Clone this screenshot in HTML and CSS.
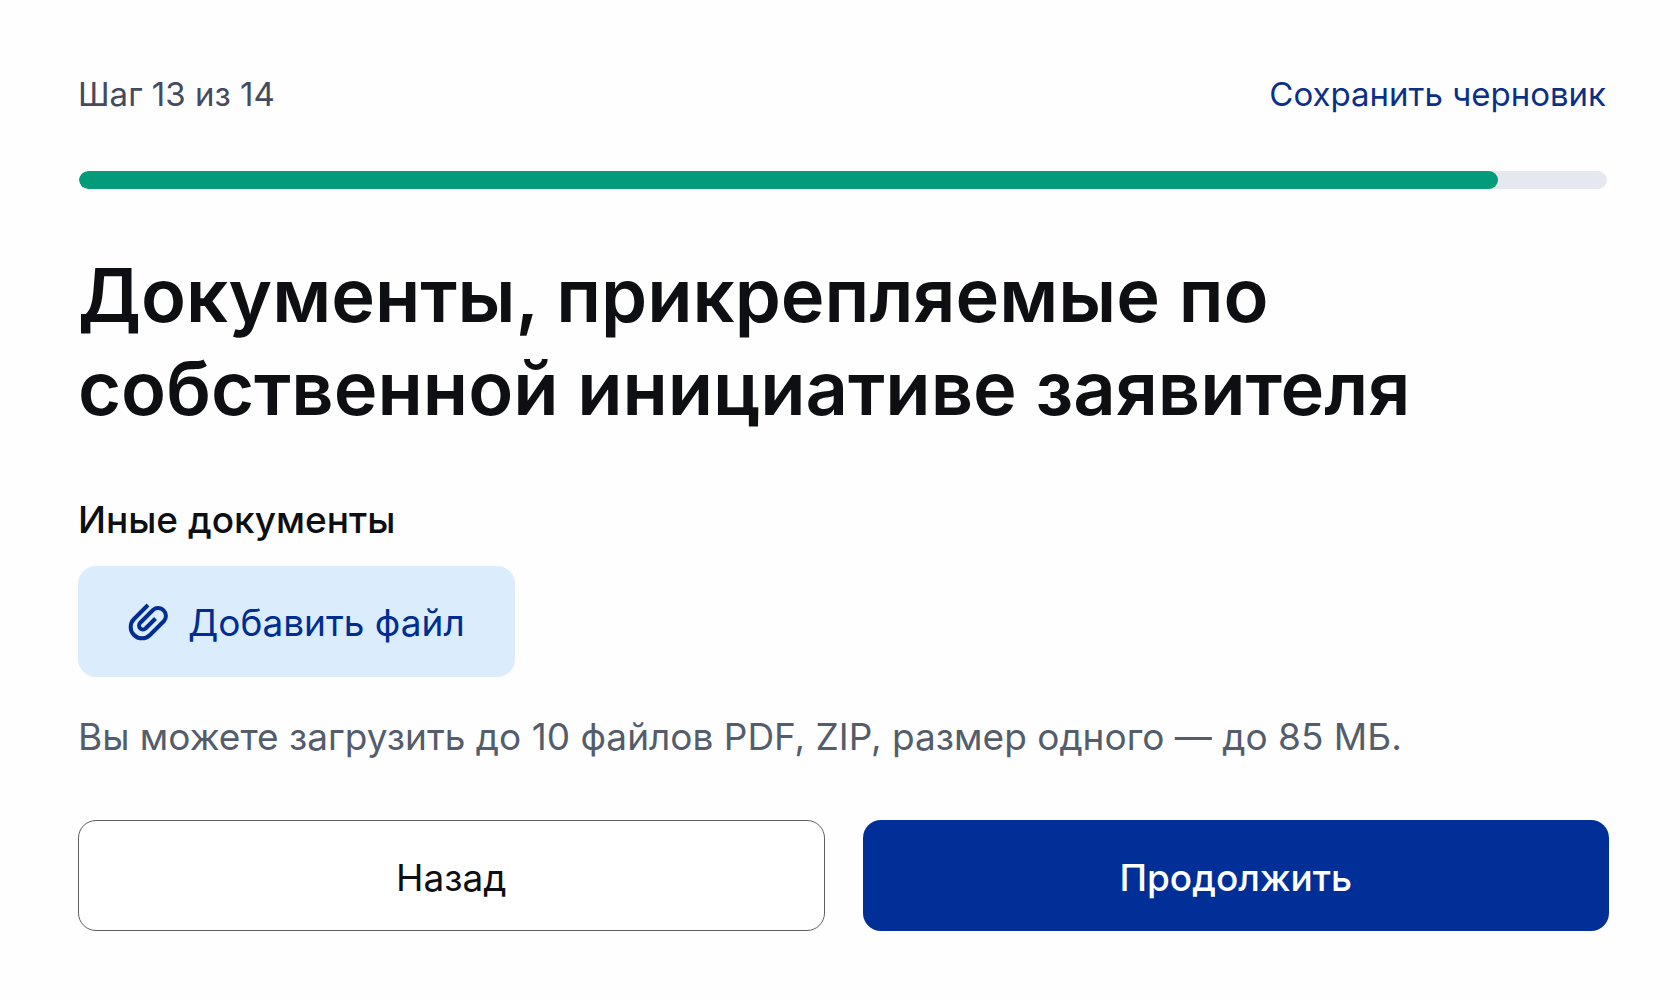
FILE: index.html
```html
<!DOCTYPE html>
<html lang="ru">
<head>
    <meta charset="UTF-8">
    <meta name="viewport" content="width=device-width, initial-scale=1.0">
    <title>Документы, прикрепляемые по собственной инициативе заявителя</title>
    <link rel="stylesheet" href="styles.css">
</head>
<body>
    <main class="container">
        <header class="step-header">
            <span class="step">Шаг 13 из 14</span>
            <a href="#" class="save-draft">Сохранить черновик</a>
        </header>
        <div class="progress" role="progressbar" aria-label="Шаг 13 из 14" aria-valuemin="0" aria-valuemax="14" aria-valuenow="13">
            <div class="progress-bar" style="width: 92.86%"></div>
        </div>

        <h1>Документы, прикрепляемые по собственной инициативе заявителя</h1>

        <section class="files">
            <h2>Иные документы</h2>
            <button type="button" class="btn btn-file">
                <svg class="icon" viewBox="0 0 40 40" aria-hidden="true">
                    <path d="M20 2 L6 16 A11.3 11.3 0 0 0 22 32 L36 18 A7.8 7.8 0 0 0 25 7 L12 20 A3.9 3.9 0 0 0 17.5 25.5 L27.5 15.5"/>
                </svg>
                Добавить файл
            </button>
            <p class="hint">Вы можете загрузить до 10 файлов PDF, ZIP, размер одного — до 85 МБ.</p>
        </section>

        <div class="actions">
            <button type="button" class="btn btn-back">Назад</button>
            <button type="submit" class="btn btn-next">Продолжить</button>
        </div>
    </main>
</body>
</html>
```
FILE: styles.css
```css
* {
    box-sizing: border-box;
}

body {
    font-family: Inter, Arial, sans-serif;
    font-size: 37px;
    line-height: 44px;
    background-color: #fefefe;
    color: #0d0f13;
    margin: 0;
}

h1, h2, p {
    margin: 0;
}

.container {
    padding: 72px 71px 68px 78px;
}

.step-header {
    display: flex;
    justify-content: space-between;
    padding-right: 3px;
    font-size: 33px;
}

.step {
    color: #454a5e;
}

.save-draft {
    color: #0b3088;
    text-decoration: none;
}

.progress {
    height: 18px;
    margin: 55px 2px 0 1px;
    border-radius: 9px;
    background-color: #e5e8ee;
    overflow: hidden;
}

.progress-bar {
    height: 100%;
    border-radius: 9px;
    background-color: #049b7a;
}

h1 {
    margin-top: 60px;
    font-size: 74px;
    line-height: 93px;
    font-weight: 600;
}

h2 {
    font-size: 37px;
    font-weight: 500;
}

.files {
    margin-top: 63px;
}

.btn {
    height: 111px;
    border: none;
    border-radius: 18px;
    font-family: inherit;
    font-size: 37px;
    cursor: pointer;
}

.btn-file {
    display: flex;
    align-items: center;
    gap: 20px;
    margin-top: 24px;
    padding: 2px 50px 0;
    background-color: #dbecfd;
    color: #002d91;
}

.icon {
    width: 40px;
    height: 40px;
    fill: none;
    stroke: currentColor;
    stroke-width: 4;
    stroke-linejoin: round;
}

.hint {
    margin-top: 38px;
    color: #535d6c;
}

.actions {
    display: grid;
    grid-template-columns: 1fr 1fr;
    gap: 38px;
    margin-top: 61px;
}

.btn-back,
.btn-next {
    padding-top: 4px;
}

.btn-back {
    border: 1px solid #5c5e62;
    background-color: #fff;
    color: #0d0f13;
}

.btn-next {
    background-color: #003097;
    color: #fff;
    font-weight: 500;
}
```
